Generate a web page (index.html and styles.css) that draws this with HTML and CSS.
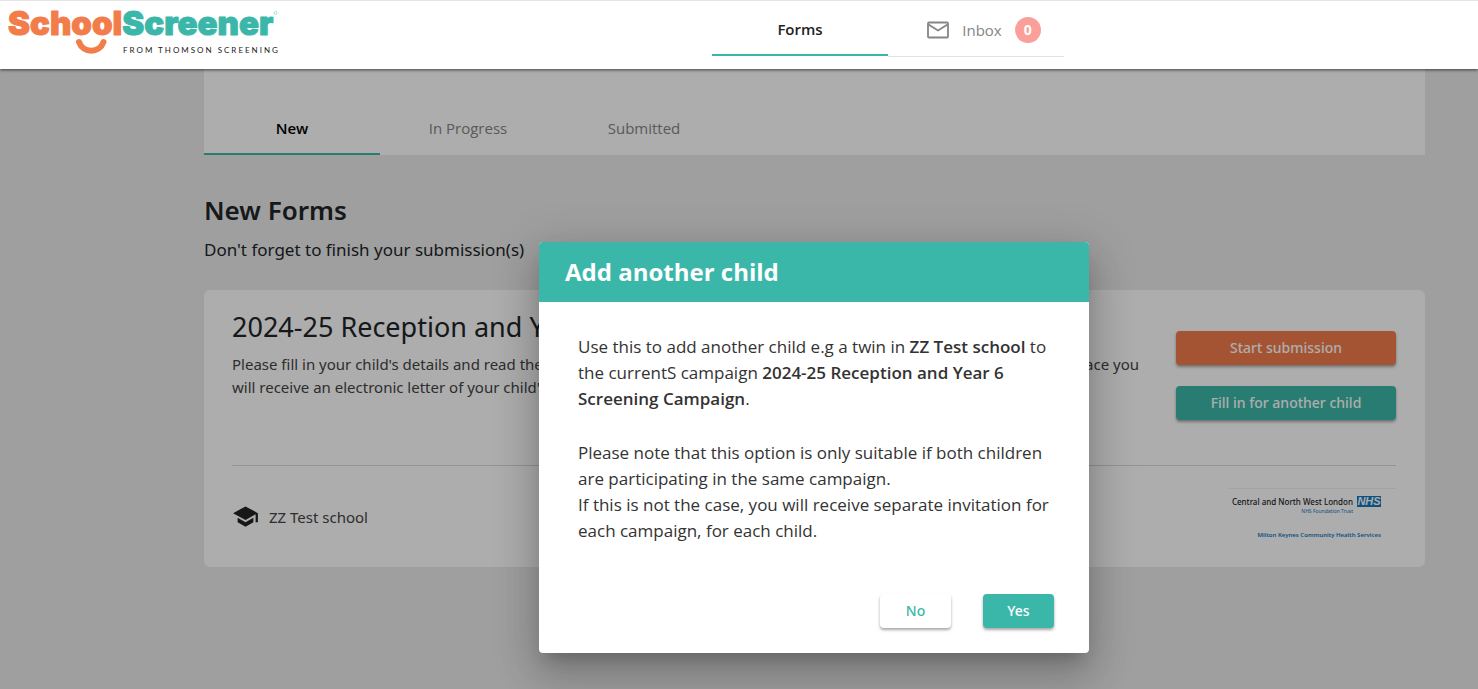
FILE: index.html
```html
<!DOCTYPE html>
<html lang="en">
<head>
<meta charset="utf-8">
<title>SchoolScreener</title>
<link rel="stylesheet" href="styles.css">
</head>
<body>
<header class="topbar">
  <div class="brand">
    <svg class="brand-art" viewBox="0 0 298 68" role="img" aria-label="SchoolScreener from Thomson Screening">
      <text class="wordmark" x="8" y="34"><tspan class="wordmark-orange">School</tspan><tspan class="wordmark-teal">Screener</tspan></text>
      <path d="M79 41C83 52.500 99.500 52.500 103.500 41" fill="none" stroke="#f27d4a" stroke-width="6" stroke-linecap="round"/>
      <circle cx="275.500" cy="12" r="1.500" fill="none" stroke="#a5e0d7" stroke-width="1"/>
      <text class="tagline" x="123" y="52">FROM THOMSON SCREENING</text>
    </svg>
  </div>
  <nav class="topnav">
    <a class="toptab toptab-active" href="#forms">Forms</a>
    <a class="toptab toptab-inbox" href="#inbox">
      <svg class="mail" viewBox="0 0 22 18" aria-hidden="true"><rect x="1" y="1.500" width="20" height="15" rx="1" fill="none" stroke="currentColor" stroke-width="1.800"/><path d="M1.500 3.500L11 9.500L20.500 3.500" fill="none" stroke="currentColor" stroke-width="1.800"/></svg>
      <span>Inbox</span>
      <span class="badge">0</span>
    </a>
  </nav>
</header>
<div class="stage">
  <main class="page">
    <nav class="panel">
      <a class="tab tab-active" href="#new">New</a>
      <a class="tab" href="#progress">In Progress</a>
      <a class="tab" href="#submitted">Submitted</a>
    </nav>
    <h1 class="heading">New Forms</h1>
    <p class="lead">Don't forget to finish your submission(s)</p>
    <section class="card">
      <div class="card-main">
        <div class="card-copy">
          <h2 class="card-title">2024-25 Reception and Year 6</h2>
          <p class="card-text"><span>Please fill in your child's details and read the</span><span>place you</span></p>
          <p class="card-text">will receive an electronic letter of your child's</p>
        </div>
        <div class="card-actions">
          <button class="btn btn-orange" type="button">Start submission</button>
          <button class="btn btn-teal" type="button">Fill in for another child</button>
        </div>
      </div>
      <div class="card-foot">
        <div class="school">
          <svg class="cap" viewBox="0 0 24 24" aria-hidden="true"><path d="M5 13.180v4L12 21l7-3.820v-4L12 17l-7-3.820zM12 3L1 9l11 6 9-4.910V17h2V9L12 3z" fill="currentColor"/></svg>
          <span>ZZ Test school</span>
        </div>
        <div class="trust">
          <div class="trust-top">
            <div class="trust-names">
              <span class="trust-name">Central and North West London</span>
              <span class="trust-sub">NHS Foundation Trust</span>
            </div>
            <span class="nhs">NHS</span>
          </div>
          <span class="trust-service">Milton Keynes Community Health Services</span>
        </div>
      </div>
    </section>
  </main>
  <div class="backdrop">
    <section class="dialog" role="dialog" aria-modal="true" aria-labelledby="dialog-title">
      <h2 class="dialog-title" id="dialog-title">Add another child</h2>
      <div class="dialog-body">
        <p class="dialog-text">Use this to add another child e.g a twin in <strong>ZZ Test school</strong> to<br>the currentS campaign <strong>2024-25 Reception and Year 6<br>Screening Campaign</strong>.</p>
        <p class="dialog-text">Please note that this option is only suitable if both children<br>are participating in the same campaign.<br>If this is not the case, you will receive separate invitation for<br>each campaign, for each child.</p>
      </div>
      <div class="dialog-actions">
        <button class="btn btn-plain" type="button">No</button>
        <button class="btn btn-teal" type="button">Yes</button>
      </div>
    </section>
  </div>
</div>
</body>
</html>
```
FILE: styles.css
```css
* { box-sizing: border-box; }

body {
  margin: 0;
  min-height: 100vh;
  display: flex;
  flex-direction: column;
  overflow: hidden;
  background: #eaeaea;
  color: #212529;
  font-family: "Noto Sans", "Open Sans", sans-serif;
  font-size: 15px;
}

h1, h2, p { margin: 0; }
a { color: inherit; text-decoration: none; }

.topbar {
  position: relative;
  z-index: 2;
  display: flex;
  border-top: 1px solid #e4e4e4;
  background: #fff;
  box-shadow: 0 1px 3px rgba(0, 0, 0, 0.6);
}

.brand { width: 298px; height: 68px; }
.brand-art { display: block; width: 298px; height: 68px; }
.wordmark {
  font-family: Inter, sans-serif;
  font-size: 33px;
  font-weight: 900;
  stroke-width: 1px;
  stroke-linejoin: round;
}
.wordmark-orange { fill: #f27d4a; stroke: #f27d4a; }
.wordmark-teal { fill: #3bb7a9; stroke: #3bb7a9; }
.tagline {
  font-family: Lato, sans-serif;
  font-size: 8px;
  letter-spacing: 2px;
  fill: #222;
}

.topnav { flex: 1; display: flex; justify-content: center; align-items: flex-start; }

.toptab {
  display: flex;
  align-items: center;
  justify-content: center;
  gap: 13px;
  width: 176px;
  height: 56px;
  padding-top: 3px;
  border-bottom: 1px solid #e2e2e2;
  color: #858585;
  font-family: "Open Sans", sans-serif;
  font-size: 15px;
  font-weight: 500;
}
.toptab-active { height: 55px; border-bottom: 2px solid #3bb7a9; color: #222; font-weight: 600; }
.toptab-inbox { padding-left: 16px; }
.mail { width: 22px; height: 18px; }
.badge {
  width: 26px;
  height: 26px;
  border-radius: 50%;
  background: #fa9f9a;
  color: #fff;
  font-size: 14px;
  font-weight: 700;
  line-height: 26px;
  text-align: center;
}

.stage { position: relative; flex: 1; }
.page { padding: 0 53px 40px 204px; }

.panel { display: flex; padding-top: 36px; background: #fff; }
.tab {
  width: 176px;
  height: 50px;
  border-bottom: 2px solid transparent;
  color: #858585;
  font-family: "Open Sans", sans-serif;
  font-size: 15px;
  font-weight: 500;
  line-height: 46px;
  text-align: center;
}
.tab-active { border-color: #3bb7a9; color: #000; font-weight: 600; }

.heading { margin-top: 37px; font-size: 26px; font-weight: 600; line-height: 36px; }
.lead { margin-top: 10px; font-size: 17px; line-height: 24px; }

.card {
  margin-top: 28px;
  padding: 20px 29px 0 28px;
  border-radius: 6px;
  background: #fff;
}
.card-main {
  display: flex;
  justify-content: space-between;
  gap: 37px;
  min-height: 156px;
  border-bottom: 1px solid #d8d8d8;
}
.card-copy { flex: 1; }
.card-title { margin-bottom: 9px; font-size: 27px; font-weight: 400; line-height: 34px; white-space: nowrap; }
.card-text { display: flex; justify-content: space-between; color: #444; line-height: 23px; white-space: nowrap; }
.card-actions { display: flex; flex-direction: column; gap: 21px; width: 220px; padding-top: 21px; }

.btn {
  height: 34px;
  padding: 0 0 2px;
  border: 0;
  border-radius: 4px;
  box-shadow: 0 2px 3px rgba(0, 0, 0, 0.35);
  color: #fff;
  font-family: "Noto Sans", sans-serif;
  font-size: 14px;
  font-weight: 500;
}
.btn-orange { background: #f27d4a; }
.btn-teal { background: #3bb7a9; }
.btn-plain { background: #fff; color: #3bb7a9; }

.card-foot { display: flex; justify-content: space-between; height: 101px; }
.school { display: flex; align-items: center; gap: 10px; color: #444; }
.cap { width: 27px; height: 27px; color: #222; }

.trust {
  display: flex;
  flex-direction: column;
  align-items: flex-end;
  align-self: flex-start;
  width: 167px;
  margin-top: 22px;
  padding: 7px 15px 0 0;
  border-top: 1px solid #efefef;
  font-weight: 600;
}
.trust-top { display: flex; gap: 4px; }
.trust-names { display: flex; flex-direction: column; align-items: flex-end; }
.trust-name { font-size: 8px; font-weight: 500; line-height: 12px; white-space: nowrap; }
.trust-sub { color: #1478be; font-size: 5px; font-weight: 400; line-height: 6px; }
.nhs {
  width: 24px;
  height: 11px;
  background: #1478be;
  color: #fff;
  font-family: "Liberation Sans", sans-serif;
  font-size: 11px;
  font-style: italic;
  font-weight: 700;
  line-height: 11px;
  text-align: center;
}
.trust-service { margin-top: 16px; color: #1478be; font-size: 6px; line-height: 10px; white-space: nowrap; }

.backdrop {
  position: absolute;
  inset: 0;
  display: flex;
  align-items: flex-start;
  justify-content: center;
  padding: 173px 0 0 150px;
  background: rgba(0, 0, 0, 0.32);
}
.dialog {
  width: 550px;
  overflow: hidden;
  border-radius: 4px;
  background: #fff;
  box-shadow: 0 11px 15px -7px rgba(0, 0, 0, 0.2), 0 24px 38px 3px rgba(0, 0, 0, 0.14), 0 9px 46px 8px rgba(0, 0, 0, 0.12);
}
.dialog-title {
  padding: 0 26px;
  background: #3bb7a9;
  color: #fff;
  font-family: "Open Sans", sans-serif;
  font-size: 24px;
  font-weight: 700;
  line-height: 60px;
}
.dialog-body { display: flex; flex-direction: column; gap: 28px; padding: 32px 39px 0; }
.dialog-text { color: #333; font-family: "Open Sans", sans-serif; font-size: 17px; line-height: 26px; white-space: nowrap; }
.dialog-text strong { font-weight: 600; }
.dialog-actions { display: flex; justify-content: flex-end; gap: 32px; padding: 50px 35px 25px; }
.dialog-actions .btn { width: 71px; }
```
